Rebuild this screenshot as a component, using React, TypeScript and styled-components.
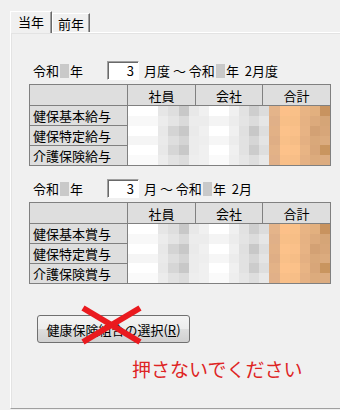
import styled, { createGlobalStyle } from "styled-components";

const GlobalStyle = createGlobalStyle`
  html, body {
    margin: 0;
    padding: 0;
    background: #f0f0f0;
  }
  body {
    font-family: "Noto Sans CJK JP", "Liberation Sans", sans-serif;
    font-size: 13px;
    color: #000;
  }
`;

// mosaic colours for the pixelated amounts (gray values for 社員/会社, hex for 合計)
const grayRows = [
  [255, 255, 255, 230, 222, 200, 232, 240, 255, 255, 240, 226, 206, 220],
  [248, 248, 248, 236, 228, 218, 236, 236, 244, 244, 236, 228, 220, 230],
  [255, 255, 255, 232, 212, 200, 234, 240, 255, 255, 240, 224, 200, 222],
  [245, 245, 245, 234, 222, 212, 236, 238, 246, 246, 236, 226, 214, 228],
  [255, 255, 255, 232, 214, 200, 236, 240, 255, 255, 240, 226, 204, 222],
  [250, 250, 250, 236, 226, 220, 238, 240, 250, 250, 238, 230, 222, 232],
];

const orangeRows = [
  ["#e4b48a", "#fcc089", "#f9c088", "#e8b484", "#e2b07f", "#c8935f"],
  ["#e0b088", "#f8bf87", "#f7be86", "#e6b283", "#dcaa7c", "#d5a577"],
  ["#e2b186", "#fcc28a", "#fac089", "#e7b384", "#d3a174", "#d7a679"],
  ["#dfae85", "#f9c088", "#f6bd86", "#e4b082", "#d9a87a", "#dbab7e"],
  ["#e3b287", "#fdc28a", "#fbc189", "#e8b484", "#d8a679", "#c9955f"],
  ["#e1b088", "#f9bf88", "#f7be87", "#e5b183", "#dcab7d", "#dcac80"],
];

const Mosaic = () => (
  <MosaicSvg viewBox="0 0 20 6" preserveAspectRatio="none" shapeRendering="crispEdges">
    {grayRows.map((row, y) =>
      row.map((g, x) => (
        <rect key={`g${x}-${y}`} x={x} y={y} width={1.02} height={1.02} fill={`rgb(${g},${g},${g})`} />
      ))
    )}
    {orangeRows.map((row, y) =>
      row.map((c, x) => (
        <rect key={`o${x}-${y}`} x={14 + x} y={y} width={1.02} height={1.02} fill={c} />
      ))
    )}
  </MosaicSvg>
);

const PayTable = (props: { labels: string[] }) => (
  <Grid>
    <HeadCell />
    <HeadCell>社員</HeadCell>
    <HeadCell>会社</HeadCell>
    <HeadCell>合計</HeadCell>
    {props.labels.map((l, i) => (
      <LabelCell key={l} $row={i + 2}>
        {l}
      </LabelCell>
    ))}
    <DataArea>
      <Mosaic />
    </DataArea>
  </Grid>
);

const PeriodRow = (props: { unit: string }) => (
  <Row>
    <span>令和</span>
    <Blur />
    <span>年</span>
    <MonthBox>3</MonthBox>
    <span>{props.unit} ～ 令和</span>
    <Blur />
    <span>年&nbsp; 2{props.unit}</span>
  </Row>
);

export default function App() {
  return (
    <>
      <GlobalStyle />
      <Root>
        <TabStrip>
          <Tab $active>当年</Tab>
          <Tab>前年</Tab>
        </TabStrip>
        <Panel>
          <PeriodRow unit="月度" />
          <PayTable labels={["健保基本給与", "健保特定給与", "介護保険給与"]} />
          <Section>
            <PeriodRow unit="月" />
            <PayTable labels={["健保基本賞与", "健保特定賞与", "介護保険賞与"]} />
          </Section>
          <ButtonWrap>
            <ClassicButton>
              健康保険組合の選択(<u>R</u>)
            </ClassicButton>
            <Cross viewBox="0 0 63 38">
              <line x1="3" y1="2" x2="60" y2="36" stroke="#ea1a1f" strokeWidth="6" />
              <line x1="60" y1="2" x2="3" y2="36" stroke="#ea1a1f" strokeWidth="6" />
            </Cross>
          </ButtonWrap>
          <Warning>押さないでください</Warning>
        </Panel>
      </Root>
    </>
  );
}

const Root = styled.div`
  width: 340px;
  height: 410px;
  box-sizing: border-box;
  padding: 11px 0 0 10px;
  overflow: hidden;
`;

const TabStrip = styled.div`
  display: flex;
  align-items: flex-start;
  height: 21px;
  position: relative;
  z-index: 2;
`;

const Tab = styled.div<{ $active?: boolean }>`
  box-sizing: border-box;
  width: ${(p) => (p.$active ? "42px" : "38px")};
  height: ${(p) => (p.$active ? "22px" : "19px")};
  margin-top: ${(p) => (p.$active ? "0" : "2px")};
  border-top: 1px solid #fff;
  border-left: 1px solid #fff;
  border-right: 1px solid #696969;
  box-shadow: inset -1px 0 #a0a0a0;
  background: #f0f0f0;
  display: flex;
  align-items: center;
  justify-content: center;
  line-height: 1;
  padding-top: ${(p) => (p.$active ? "0" : "1px")};
  padding-bottom: ${(p) => (p.$active ? "2px" : "0")};
  font-size: 13px;
`;

const Panel = styled.div`
  box-sizing: border-box;
  height: 377px;
  border-top: 1px solid #fff;
  border-left: 1px solid #fff;
  border-bottom: 1px solid #a0a0a0;
  box-shadow: inset 1px 1px #e3e3e3;
  padding: 28px 0 0 18px;
`;

const Section = styled.div`
  margin-top: 13px;
`;

const Row = styled.div`
  display: flex;
  align-items: center;
  height: 19px;
  padding-left: 4px;
  margin-bottom: 4px;
  white-space: pre;
  line-height: 1;
`;

const Blur = styled.span`
  display: inline-block;
  width: 9px;
  height: 14px;
  margin: 0 1px;
  background: #c9c9c9;
`;

const MonthBox = styled.div`
  box-sizing: border-box;
  width: 32px;
  height: 19px;
  margin: 0 5px 0 24px;
  padding-right: 4px;
  background: #fff;
  border-top: 1px solid #a0a0a0;
  border-left: 1px solid #a0a0a0;
  border-right: 1px solid #fff;
  border-bottom: 1px solid #fff;
  box-shadow: inset 1px 1px #696969;
  display: flex;
  align-items: center;
  justify-content: flex-end;
`;

const Grid = styled.div`
  display: grid;
  grid-template-columns: 97px 67px 66px 67px;
  grid-template-rows: 20px 19px 19px 19px;
  gap: 1px;
  width: fit-content;
  background: #808080;
  border: 1px solid #808080;
`;

const HeadCell = styled.div`
  background: #dedede;
  display: flex;
  align-items: center;
  justify-content: center;
  line-height: 1;
`;

const LabelCell = styled.div<{ $row: number }>`
  grid-column: 1;
  grid-row: ${(p) => p.$row};
  background: #dedede;
  display: flex;
  align-items: center;
  padding-left: 3px;
  line-height: 1;
`;

const DataArea = styled.div`
  grid-column: 2 / 5;
  grid-row: 2 / 5;
  background: #fff;
`;

const MosaicSvg = styled.svg`
  display: block;
  width: 100%;
  height: 100%;
`;

const ButtonWrap = styled.div`
  position: relative;
  width: fit-content;
  margin: 31px 0 0 8px;
`;

const ClassicButton = styled.button`
  box-sizing: border-box;
  width: 153px;
  height: 28px;
  border: 1px solid #707070;
  border-radius: 3px;
  background: linear-gradient(#f4f4f4 0%, #ececec 50%, #dedede 51%, #d0d0d0 100%);
  font-family: inherit;
  font-size: 13px;
  color: #000;
  padding: 0;
  display: flex;
  align-items: center;
  justify-content: center;
  u {
    text-decoration: underline;
  }
`;

const Cross = styled.svg`
  position: absolute;
  left: 43px;
  top: -9px;
  width: 63px;
  height: 38px;
  overflow: visible;
`;

const Warning = styled.div`
  margin: 14px 0 0 103px;
  font-size: 19px;
  line-height: 24px;
  color: #de2424;
  white-space: nowrap;
`;
